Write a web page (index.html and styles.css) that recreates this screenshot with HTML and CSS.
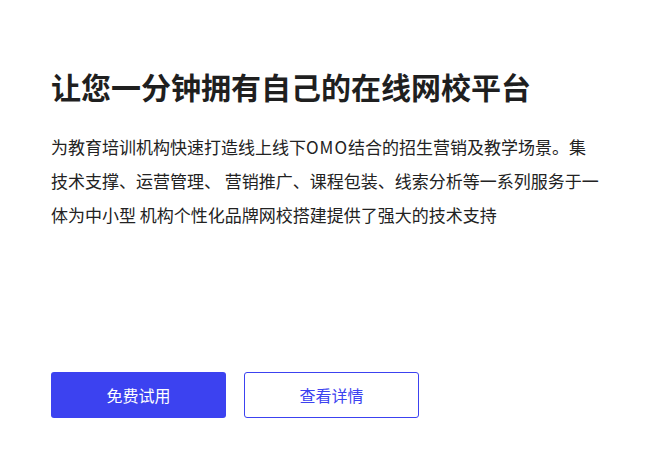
FILE: index.html
```html
<!DOCTYPE html>
<html lang="zh-CN">
<head>
<meta charset="utf-8">
<title>在线网校平台</title>
<link rel="stylesheet" href="styles.css">
</head>
<body>
<section class="hero">
  <h1 class="hero-title">让您一分钟拥有自己的在线网校平台</h1>
  <p class="hero-desc">为教育培训机构快速打造线上线下<span class="latin">OMO</span>结合的招生营销及教学场景。集<br>技术支撑、运营管理、 营销推广、课程包装、线索分析等一系列服务于一<br>体为中小型 机构个性化品牌网校搭建提供了强大的技术支持</p>
  <div class="hero-actions">
    <a class="btn btn-primary" href="#">免费试用</a>
    <a class="btn btn-outline" href="#">查看详情</a>
  </div>
</section>
</body>
</html>
```

FILE: styles.css
```css
html, body {
  margin: 0;
  padding: 0;
  background: #ffffff;
}

body {
  font-family: "Noto Sans CJK SC", "Noto Sans", sans-serif;
  color: #222222;
}

.hero {
  padding: 65px 0 0 51px;
}

.hero-title {
  margin: 0;
  font-size: 30px;
  line-height: 42px;
  font-weight: 700;
  color: #1f1f1f;
}

.hero-desc {
  margin: 23px 0 0 0;
  font-size: 17px;
  line-height: 34px;
  color: #222222;
}

.latin {
  letter-spacing: 1px;
}

.hero-actions {
  display: flex;
  gap: 18px;
  margin-top: 140px;
}

.btn {
  box-sizing: border-box;
  width: 175px;
  height: 46px;
  display: flex;
  align-items: center;
  justify-content: center;
  border-radius: 3px;
  font-size: 16px;
  text-decoration: none;
}

.btn-primary {
  background: #3c42f0;
  color: #ffffff;
}

.btn-outline {
  border: 1px solid #3c42f0;
  color: #3c42f0;
  background: #ffffff;
}
```
